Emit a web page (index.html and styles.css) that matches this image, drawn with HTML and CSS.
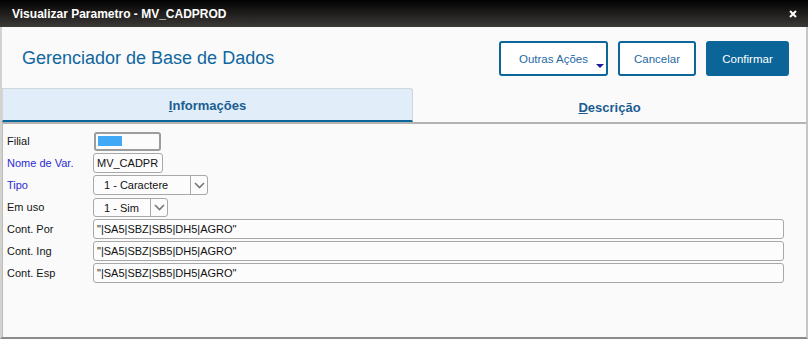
FILE: index.html
```html
<!doctype html>
<html lang="pt">
<head>
	<meta charset="utf-8">
	<title>Visualizar Parametro - MV_CADPROD</title>
	<link rel="stylesheet" href="styles.css">
</head>
<body>
	<div class="dialog">
		<div class="titlebar">
			<span class="title">Visualizar Parametro - MV_CADPROD</span>
			<svg class="close" width="8" height="8" viewBox="0 0 8 8">
				<path d="M1 1 L7 7 M7 1 L1 7" stroke="#fff" stroke-width="2"/>
			</svg>
		</div>

		<div class="main">
			<div class="header">
				<h1 class="heading">Gerenciador de Base de Dados</h1>
				<div class="actions">
					<button class="btn btn-more">Outras Ações<span class="caret"></span></button>
					<button class="btn btn-cancel">Cancelar</button>
					<button class="btn btn-primary">Confirmar</button>
				</div>
			</div>

			<div class="tabs">
				<div class="tab tab-active"><u>I</u>nformações</div>
				<div class="tab"><u>D</u>escrição</div>
			</div>

			<div class="panel">
				<div class="row">
					<label>Filial</label>
					<div class="field field-filial"><span class="fill"></span></div>
				</div>
				<div class="row">
					<label class="req">Nome de Var.</label>
					<div class="field field-name">MV_CADPR</div>
				</div>
				<div class="row">
					<label class="req">Tipo</label>
					<div class="field select select-tipo">
						<span class="value">1 - Caractere</span>
						<span class="arrow">
							<svg width="11" height="7" viewBox="0 0 11 7"><path d="M1 1 L5.5 5.5 L10 1" fill="none" stroke="#777" stroke-width="1.6"/></svg>
						</span>
					</div>
				</div>
				<div class="row">
					<label>Em uso</label>
					<div class="field select select-uso">
						<span class="value">1 - Sim</span>
						<span class="arrow">
							<svg width="11" height="7" viewBox="0 0 11 7"><path d="M1 1 L5.5 5.5 L10 1" fill="none" stroke="#777" stroke-width="1.6"/></svg>
						</span>
					</div>
				</div>
				<div class="row">
					<label>Cont. Por</label>
					<div class="field field-wide">"|SA5|SBZ|SB5|DH5|AGRO"</div>
				</div>
				<div class="row">
					<label>Cont. Ing</label>
					<div class="field field-wide">"|SA5|SBZ|SB5|DH5|AGRO"</div>
				</div>
				<div class="row">
					<label>Cont. Esp</label>
					<div class="field field-wide">"|SA5|SBZ|SB5|DH5|AGRO"</div>
				</div>
			</div>
		</div>
	</div>
</body>
</html>
```

FILE: styles.css
```css
	html, body {
		margin: 0;
		padding: 0;
	}
	body {
		background: #fafafa;
		font-family: "Liberation Sans", Arial, sans-serif;
	}
	.dialog {
		width: 808px;
		height: 339px;
		display: flex;
		flex-direction: column;
		overflow: hidden;
	}
	.titlebar {
		height: 27px;
		flex: none;
		display: flex;
		align-items: center;
		justify-content: space-between;
		padding: 0 11px 0 12px;
		background: linear-gradient(#020202, #3c3a37);
		color: #fff;
		font-weight: bold;
		font-size: 12px;
	}
	.close {
		margin-top: 1px;
	}
	.main {
		flex: 1;
		display: flex;
		flex-direction: column;
		border-left: 2px solid #d4d2cc;
		border-right: 2px solid #c6c6c6;
		border-bottom: 2px solid #8a8a8a;
		background: #fafafa;
	}
	.header {
		height: 61px;
		flex: none;
		display: flex;
		align-items: center;
		justify-content: space-between;
		padding: 2px 17px 0 20px;
		box-sizing: border-box;
	}
	.heading {
		margin: 0;
		font-size: 18px;
		font-weight: normal;
		color: #10669f;
	}
	.actions {
		display: flex;
		gap: 10px;
	}
	.btn {
		position: relative;
		height: 35px;
		border: 2px solid #0d6699;
		border-radius: 3px;
		background: #fff;
		color: #1f6aa3;
		font-family: "Liberation Sans", Arial, sans-serif;
		font-size: 11.5px;
		padding: 0;
	}
	.btn-more {
		width: 109px;
	}
	.btn-cancel {
		width: 78px;
	}
	.btn-primary {
		width: 83px;
		background: #0b6598;
		color: #fff;
	}
	.caret {
		position: absolute;
		right: 2px;
		bottom: 6px;
		width: 0;
		height: 0;
		border-left: 4px solid transparent;
		border-right: 4px solid transparent;
		border-top: 4px solid #1c1c9c;
	}
	.tabs {
		height: 34px;
		flex: none;
		display: flex;
	}
	.tab {
		flex: 1;
		height: 34px;
		padding-top: 5px;
		text-align: center;
		font-size: 13px;
		font-weight: bold;
		color: #1b5d92;
		line-height: 30px;
		box-sizing: border-box;
	}
	.tab-active {
		flex: none;
		width: 411px;
		padding-top: 0;
		line-height: 33px;
		background: #e1edf8;
		border: 1px solid #cfd6dc;
		border-bottom: 2px solid #0b6598;
		border-radius: 0 3px 0 0;
	}
	.panel {
		flex: 1;
		border-top: 2px solid #b3b3b3;
		border-left: 1px solid #bdbdbd;
		padding: 7px 0 0 4px;
		display: grid;
		grid-auto-rows: 20px;
		row-gap: 2px;
		align-content: start;
	}
	.row {
		display: flex;
		align-items: center;
	}
	.row label {
		width: 86px;
		flex: none;
		font-size: 11px;
		color: #151515;
	}
	.row label.req {
		color: #2b2bd2;
	}
	.field {
		height: 20px;
		box-sizing: border-box;
		border: 1px solid #a8a8a8;
		border-radius: 3px;
		background: #fcfcfc;
		font-size: 11px;
		color: #111;
		line-height: 18px;
		padding-left: 3px;
		overflow: hidden;
		white-space: nowrap;
	}
	.field-filial {
		width: 67px;
		height: 19px;
		margin-left: 1px;
		border: 2px solid #9c9c9c;
		padding: 2px;
	}
	.fill {
		display: block;
		width: 24px;
		height: 10px;
		background: #40a8f4;
	}
	.field-name {
		width: 70px;
	}
	.select {
		display: flex;
		padding-left: 0;
	}
	.select .value {
		flex: 1;
		padding-left: 10px;
	}
	.select .arrow {
		width: 16px;
		border-left: 1px solid #a8a8a8;
		display: flex;
		align-items: center;
		justify-content: center;
	}
	.select-tipo {
		width: 115px;
	}
	.select-uso {
		width: 75px;
		height: 19px;
	}
	.field-wide {
		width: 691px;
	}
```
